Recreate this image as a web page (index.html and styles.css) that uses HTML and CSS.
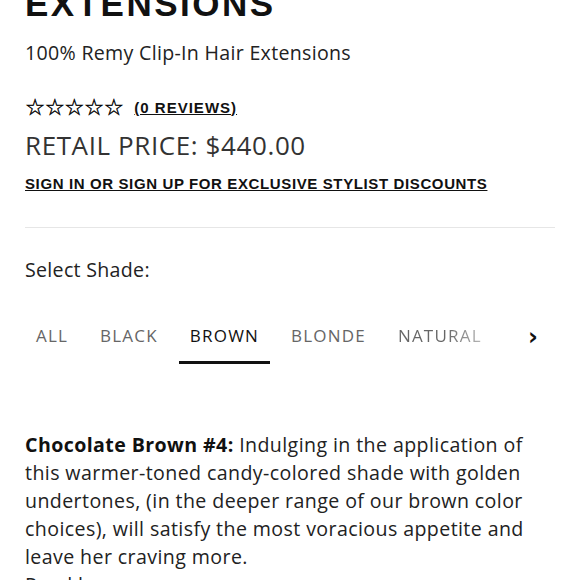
FILE: index.html
```html
<!DOCTYPE html>
<html>
<head>
<meta charset="utf-8">
<link rel="stylesheet" href="styles.css">
</head>
<body>
<div class="page">
  <h1 class="title">EXTENSIONS</h1>
  <p class="subtitle">100% Remy Clip-In Hair Extensions</p>
  <div class="rating">
    <span class="stars">☆☆☆☆☆</span>
    <a class="reviews" href="#">(0 REVIEWS)</a>
  </div>
  <div class="price">RETAIL PRICE: $440.00</div>
  <a class="signin" href="#">SIGN IN OR SIGN UP FOR EXCLUSIVE STYLIST DISCOUNTS</a>
  <hr class="divider">
  <div class="shade-label">Select Shade:</div>
  <div class="tabs">
    <div class="tab-list">
      <span class="tab">ALL</span>
      <span class="tab">BLACK</span>
      <span class="tab active">BROWN</span>
      <span class="tab">BLONDE</span>
      <span class="tab fade">NATURAL</span>
    </div>
    <span class="chev">&#x203A;</span>
  </div>
  <p class="desc"><b>Chocolate Brown #4:</b> Indulging in the application of this warmer-toned candy-colored shade with golden undertones, (in the deeper range of our brown color choices), will satisfy the most voracious appetite and leave her craving more.</p>
  <a class="readless" href="#">Read less</a>
</div>
</body>
</html>
```
FILE: styles.css
```css
html, body { margin: 0; padding: 0; background: #fff; }
body { font-family: "Open Sans", "Liberation Sans", sans-serif; color: #111; overflow: hidden; height: 580px; }
.page { padding: 0 25px; margin-top: -16px; }
.title { font-family: "Liberation Sans", sans-serif; font-weight: 700; font-size: 35px; letter-spacing: 2.5px; line-height: 40px; margin: 0; color: #111; }
.subtitle { font-size: 19.6px; letter-spacing: 0.3px; margin: 16px 0 0; line-height: 26px; color: #222; }
.rating { display: flex; align-items: center; margin-top: 30px; height: 22px; }
.stars { font-family: "DejaVu Sans", sans-serif; font-size: 22.5px; letter-spacing: -0.5px; color: #000; line-height: 22px; -webkit-text-stroke: 0.4px #000; }
.reviews { font-family: "Liberation Sans", sans-serif; font-weight: 700; font-size: 15px; color: #111; margin-left: 11px; letter-spacing: 1px; text-decoration: underline; }
.price { font-size: 26px; letter-spacing: 0.6px; color: #333; margin-top: 11px; line-height: 32px; }
.signin { display: inline-block; font-family: "Liberation Sans", sans-serif; font-weight: 700; font-size: 15px; color: #111; margin-top: 14px; letter-spacing: 0.62px; text-decoration: underline; }
.divider { border: 0; border-top: 1px solid #e6e6e6; margin: 33px 0 0; }
.shade-label { font-size: 19.6px; letter-spacing: 0.3px; color: #222; margin-top: 29px; line-height: 26px; }
.tabs { display: flex; align-items: flex-start; justify-content: space-between; margin-top: 41px; }
.tab-list { display: flex; gap: 0; }
.tab { font-size: 17px; letter-spacing: 1.2px; color: #666; padding: 0 11px 13px; border-bottom: 3px solid transparent; line-height: 24px; margin-right: 10px; }
.tab.active { color: #111; border-bottom-color: #111; }
.tab.fade { background: linear-gradient(90deg, #666 55%, #d0d0d0 100%); -webkit-background-clip: text; background-clip: text; color: transparent; }
.chev { font-family: "DejaVu Sans", sans-serif; font-size: 24px; font-weight: 700; color: #111; margin-right: 17px; line-height: 26px; }
.desc { font-size: 19.6px; letter-spacing: 0.4px; line-height: 28px; margin: 67px 0 0; color: #222; }
.desc b { color: #111; }
.readless { font-size: 19.6px; letter-spacing: 0.4px; line-height: 28px; color: #222; text-decoration: none; }
```
